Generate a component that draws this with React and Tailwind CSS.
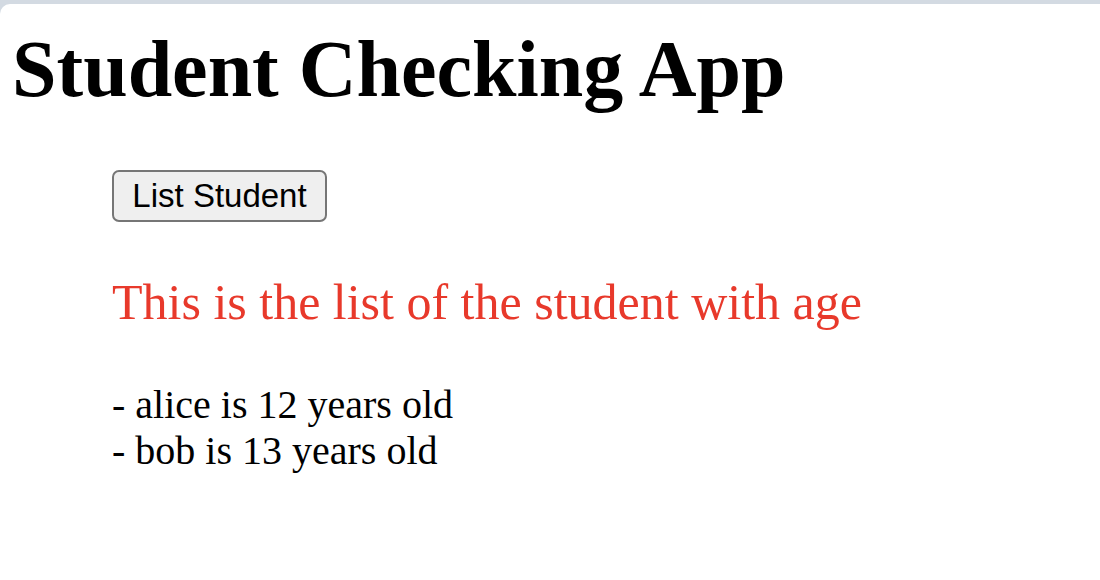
import React from 'react';

const students = [
    { name: 'alice', age: 12 },
    { name: 'bob', age: 13 }
];

const App = () => {
    return (
        <div className="w-full h-[580px] bg-[#d3dae2] pt-[4px] overflow-hidden">
            <div className="h-full bg-white rounded-tl-[10px] text-black" style={{ fontFamily: '"Liberation Serif", "Times New Roman", serif' }}>
                {/* Title */}
                <h1 className="pl-[12px] pt-[21px] text-[80px] font-bold leading-[88px]">
                    Student Checking App
                </h1>

                <div className="pl-[112px] flex flex-col items-start">
                    <button className="mt-[57px] w-[215px] h-[52px] flex items-center justify-center bg-[#efefef] border-[2.5px] border-[#767676] rounded-[7px] text-[33px] leading-[38px] text-black font-['Liberation_Sans',Arial,sans-serif]">
                        List Student
                    </button>

                    <p className="mt-[53px] text-[50px] leading-[55px] text-[#e8392b]">
                        This is the list of the student with age
                    </p>

                    <ul className="mt-[52px] text-[40px] leading-[46px]">
                        {students.map((s, i) => (
                            <li key={i}>- {s.name} is {s.age} years old</li>
                        ))}
                    </ul>
                </div>
            </div>
        </div>
    );
};

export default App;
